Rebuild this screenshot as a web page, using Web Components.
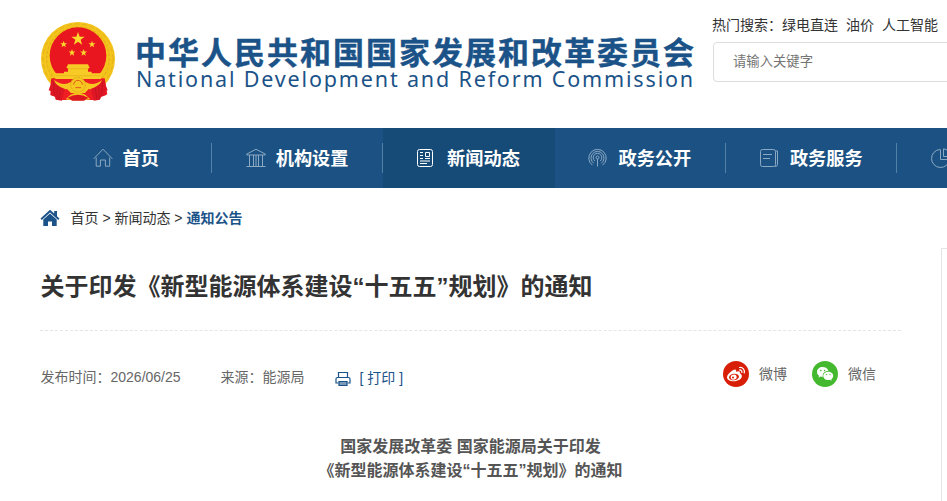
<!DOCTYPE html>
<html lang="zh-CN">
<head>
<meta charset="utf-8">
<title>关于印发《新型能源体系建设“十五五”规划》的通知</title>
<style>
  body {
    margin: 0;
    background: #fff;
    color: #333;
    font: 14px/20px "Liberation Sans", "Noto Sans CJK SC", sans-serif;
    overflow: hidden;
  }
</style>
</head>
<body>
<ndrc-page></ndrc-page>

<script>
const STAR = '0,-1 .235,-.324 .951,-.309 .38,.124 .588,.809 0,.4 -.588,.809 -.38,.124 -.951,-.309 -.235,-.324';

const ICONS = {
  home: '<path d="M.7 10.800 10 1.200l9.300 9.600M3.200 9.500v8.700h4.200v-6.200h5v6.200h4.300V9.500"/>',
  building: '<path d="M.8 6 10 1.300 19.200 6v1H.8zM3.500 7v11.200M7.500 7v11.200M10 7v11.200M12.500 7v11.200M16.500 7v11.200M.5 18.500h19"/>',
  news: '<rect x=".5" y="1.500" width="15" height="17" rx="2"/><path d="M3 4.500h3M3 7.500h3M3 10.500h3M3 13h10M3 15.500h7M8.500 4.500h4v4h-4zM8 10.500h5"/>',
  signal: '<circle cx="9.500" cy="9.500" r="1.500"/><path d="M9.500 11v7.500M6.800 13a4.300 4.300 0 1 1 5.400 0M5.700 15.200a6.500 6.500 0 1 1 7.600 0M4.500 17.200a8.700 8.700 0 1 1 10 0"/>',
  service: '<rect x=".5" y="1.500" width="15" height="17" rx="2"/><path d="M15.500 3h2v13.500q0 2-2.500 2M3 6.500h9M3 10.500h7"/>',
  chart: '<path d="M9 1.500a9 9 0 1 0 9.500 10H9.500V1.500M12.500.8a8 8 0 0 1 7 7.700h-7z"/>'
};

class NdrcEmblem extends HTMLElement {
  constructor() {
    super();
    this.attachShadow({ mode: 'open' });
  }

  connectedCallback() {
    const star = (x, y, r) => `<polygon points="${STAR}" transform="translate(${x} ${y}) scale(${r})" fill="#fcd92d"/>`;
    this.shadowRoot.innerHTML = `
      <style>
        :host { display: block; width: 77px; height: 83px; }
        svg { display: block; }
      </style>
      <svg width="77" height="83" viewBox="30 30 231 249">
        <circle cx="144" cy="147" r="111" fill="#f3c41c"/>
        <circle cx="144" cy="147" r="105" fill="none" stroke="#dfa819" stroke-width="2" stroke-dasharray="15 8"/>
        <circle cx="144" cy="145" r="94" fill="none" stroke="#e6b318" stroke-width="4" stroke-dasharray="9 5"/>
        <circle cx="144" cy="137" r="85" fill="#e9161f"/>
        <path d="M64 205h160l8 48-38 17H95l-34-16z" fill="#ef1d24"/>
        ${star(144, 87, 21)}
        ${star(101, 103, 11)}
        ${star(186, 103, 11)}
        ${star(126, 128, 11)}
        ${star(161, 128, 11)}
        <path d="M114 163h60l5 11h-5v11h11v5h28v17H76v-17h26v-5h12v-11h-5z" fill="#f7ca25"/>
        <path d="M112 176h65M78 197h134" stroke="#e5ad18" stroke-width="2"/>
        <path d="M72 210q28 20 50 6 22-17 45 0 22 14 50-6l-5 20q-18 12-36 7l-11 12h-42l-12-12q-22 4-35-7z" fill="#f6c621"/>
        <circle cx="144" cy="224" r="22" fill="#f6c621" stroke="#dba016" stroke-width="3" stroke-dasharray="5 3"/>
        <path d="M131 224a13 13 0 0 1 26 0M136 233h17" fill="none" stroke="#e05a19" stroke-width="3"/>
        <path d="M64 208q-1 17-8 33l8 3-2 12 12 2 3 11 19 3 8-36q-25-7-33-27M224 208q1 17 9 33l-8 3 2 12-13 2-4 11-19 3-8-36q25-7 34-27" fill="#df1724"/>
        <path d="M71 217l2 40M82 230l-1 37M91 235l-4 34M218 217l-3 40M206 230l2 37M196 235l5 34" stroke="#b8101e" stroke-width="2"/>
        <path d="M121 255q23-15 46 0l14 13q-37 7-74 0z" fill="#f3c01d"/>
        <path d="M113 263q30-18 62 0l-13 9h-35z" fill="#dc1620"/>
      </svg>
    `;
  }
}
customElements.define('ndrc-emblem', NdrcEmblem);

class NdrcHeader extends HTMLElement {
  constructor() {
    super();
    this.attachShadow({ mode: 'open' });
  }

  connectedCallback() {
    this.shadowRoot.innerHTML = `
      <style>
        :host {
          display: flex;
          box-sizing: border-box;
          width: 1200px;
          height: 128px;
          padding-left: 40px;
        }
        ndrc-emblem { margin-top: 20px; }
        .names {
          width: 577px;
          margin: 41px 0 0 18px;
          color: #1b5388;
          white-space: nowrap;
        }
        .cn {
          font: bold 31px/26px "Liberation Sans", "Noto Sans CJK SC", sans-serif;
          letter-spacing: 2px;
          -webkit-text-stroke: .4px #1b5388;
        }
        .en {
          margin-left: 1px;
          font: 21.500px/24px "Noto Sans", sans-serif;
          letter-spacing: 1.840px;
        }
        .search { margin: 15px 0 0 1px; width: 300px; }
        .hot { display: flex; gap: 8px; margin-left: -1px; white-space: nowrap; }
        .hot b { font-weight: normal; margin-right: -8px; }
        .box {
          box-sizing: border-box;
          height: 40px;
          margin-top: 7px;
          padding-left: 19px;
          border: 1px solid #ddd;
          border-radius: 4px;
          color: #757575;
          font-size: 13.330px;
          line-height: 38px;
        }
      </style>
      <ndrc-emblem></ndrc-emblem>
      <div class="names">
        <div class="cn">中华人民共和国国家发展和改革委员会</div>
        <div class="en">National Development and Reform Commission</div>
      </div>
      <div class="search">
        <div class="hot"><b>热门搜索：</b><span>绿电直连</span><span>油价</span><span>人工智能</span></div>
        <div class="box">请输入关键字</div>
      </div>
    `;
  }
}
customElements.define('ndrc-header', NdrcHeader);

class NdrcNavItem extends HTMLElement {
  constructor() {
    super();
    this.attachShadow({ mode: 'open' });
  }

  connectedCallback() {
    this.shadowRoot.innerHTML = `
      <style>
        :host {
          display: flex;
          flex: none;
          align-items: center;
          width: 171.400px;
          height: 60px;
          color: #fff;
          font-size: 18.200px;
          font-weight: bold;
        }
        :host([active]) { background: #164a77; }
        .inner {
          display: flex;
          flex: 1;
          align-items: center;
          justify-content: center;
          gap: 10px;
          height: 30px;
          border-right: 1px solid #5380a7;
        }
        :host([active]) .inner { border-color: transparent; }
        :host([edge]) .inner { justify-content: flex-start; padding-left: 34px; }
        span { padding-top: 1px; }
        svg { fill: none; stroke: #8ba9c3; stroke-width: 1; }
        :host([active]) svg { stroke: #fff; }
      </style>
      <div class="inner">
        <svg width="20" height="20" viewBox="0 0 20 20">${ICONS[this.getAttribute('icon')]}</svg>
        <span><slot></slot></span>
      </div>
    `;
  }
}
customElements.define('ndrc-nav-item', NdrcNavItem);

class NdrcNav extends HTMLElement {
  constructor() {
    super();
    this.attachShadow({ mode: 'open' });
  }

  connectedCallback() {
    this.shadowRoot.innerHTML = `
      <style>
        :host {
          display: flex;
          height: 60px;
          padding-left: 40.500px;
          background: #1c5283;
        }
      </style>
      <ndrc-nav-item icon="home">首页</ndrc-nav-item>
      <ndrc-nav-item icon="building">机构设置</ndrc-nav-item>
      <ndrc-nav-item icon="news" active>新闻动态</ndrc-nav-item>
      <ndrc-nav-item icon="signal">政务公开</ndrc-nav-item>
      <ndrc-nav-item icon="service">政务服务</ndrc-nav-item>
      <ndrc-nav-item icon="chart" edge></ndrc-nav-item>
    `;
  }
}
customElements.define('ndrc-nav', NdrcNav);

class NdrcCrumbs extends HTMLElement {
  constructor() {
    super();
    this.attachShadow({ mode: 'open' });
  }

  connectedCallback() {
    this.shadowRoot.innerHTML = `
      <style>
        :host { display: flex; align-items: center; height: 60px; padding-left: 40px; }
        svg { margin-right: 10.500px; }
        b { color: #1b5388; }
      </style>
      <svg width="20" height="18" viewBox="0 0 20 18" fill="#1b5388">
        <path d="M10 .8.5 9.500l1.300 1.400L10 3.600l8.200 7.300 1.300-1.400-2.500-2.300V2h-2.800v2.600z"/>
        <path d="M10 4.600 3.300 10.600V17H8v-4.500h4V17h4.700v-6.400z"/>
      </svg>
      <span>首页 &gt; 新闻动态 &gt; <b>通知公告</b></span>
    `;
  }
}
customElements.define('ndrc-crumbs', NdrcCrumbs);

class NdrcShare extends HTMLElement {
  constructor() {
    super();
    this.attachShadow({ mode: 'open' });
  }

  connectedCallback() {
    const glyph = this.getAttribute('type') === 'weibo'
      ? `<circle cx="13" cy="13" r="13" fill="#d81e06"/>
         <path d="M16.800 12.300c.8-2-1-2.800-3.800-1.600.8-2.400-.8-3-3.200-1.500C6.500 11.200 4 14 4 16.300c0 2.600 3.300 4 6.600 4 4.700 0 8.300-2.500 8.300-5 0-1.500-.9-2.400-2.100-3z" fill="#fff"/>
         <ellipse cx="11" cy="16" rx="5" ry="3.300" transform="rotate(-8 11 16)" fill="#d81e06"/>
         <ellipse cx="10.700" cy="16.200" rx="3" ry="2.500" transform="rotate(-20 10.700 16.200)" fill="#fff"/>
         <circle cx="10" cy="16.600" r="1" fill="#d81e06"/>
         <path d="M16.500 6.500c3.200-.5 5.600 2.200 4.700 5.500M16.500 9c1.600-.2 2.700.9 2.300 2.500" fill="none" stroke="#fff" stroke-width="1.200" stroke-linecap="round"/>`
      : `<circle cx="13" cy="13" r="13" fill="#44b92f"/>
         <path d="M10.700 6C7.500 6 5 8.100 5 10.900c0 1.600.8 2.900 2.100 3.800L6.500 16.500l2.200-1.100c.8.2 1.400.3 2.200.3-.8-3.200 1.900-5.900 5.500-5.700C15.800 7.600 13.500 6 10.700 6z" fill="#fff"/>
         <path d="M16.300 10.700c-2.800 0-5 1.900-5 4.200s2.200 4.200 5 4.200c.6 0 1.200-.1 1.700-.3l1.700.9-.5-1.500c1.200-.8 2-1.900 2-3.300 0-2.300-2.200-4.200-4.900-4.200z" fill="#fff"/>
         <g fill="#44b92f"><circle cx="8.800" cy="9.500" r=".8"/><circle cx="12.600" cy="9.500" r=".8"/><circle cx="14.600" cy="13.600" r=".7"/><circle cx="18" cy="13.600" r=".7"/></g>`;

    this.shadowRoot.innerHTML = `
      <style>
        :host { display: flex; align-items: center; gap: 10px; height: 26px; }
      </style>
      <svg width="26" height="26" viewBox="0 0 26 26">${glyph}</svg>
      <slot></slot>
    `;
  }
}
customElements.define('ndrc-share', NdrcShare);

class NdrcArticle extends HTMLElement {
  constructor() {
    super();
    this.attachShadow({ mode: 'open' });
  }

  connectedCallback() {
    this.shadowRoot.innerHTML = `
      <style>
        :host { display: block; width: 861px; margin-left: 40px; }
        h1 {
          margin: 0;
          padding: 21px 0 25px .5px;
          border-bottom: 1px dashed #e5e5e5;
          font-size: 24px;
          line-height: 36px;
        }
        .meta {
          display: flex;
          height: 26px;
          padding: 30px 0 0 .5px;
          color: #666;
        }
        .meta > span { margin: 6px 40px 0 0; }
        .meta .source { margin-right: 30px; }
        .print {
          display: flex;
          align-items: center;
          gap: 9px;
          height: 20px;
          margin-top: 8px;
          color: #1b5388;
        }
        .print span { margin-top: -2px; }
        .share { display: flex; gap: 25px; margin: 0 25px 0 auto; }
        .body {
          margin-top: 48px;
          color: #555;
          font-size: 16px;
          font-weight: bold;
          line-height: 24px;
          text-align: center;
        }
      </style>
      <h1>关于印发《新型能源体系建设“十五五”规划》的通知</h1>
      <div class="meta">
        <span>发布时间：2026/06/25</span>
        <span class="source">来源：能源局</span>
        <div class="print">
          <svg width="16" height="16" viewBox="0 0 16 16" fill="none" stroke="#1b5388" stroke-width="1.200">
            <path d="M3.500 6.500V1.500h9v5M3.500 12H1V8q0-1.500 1.500-1.500h11Q15 6.500 15 8v4h-2.500"/>
            <path d="M4 10.500h8v4H4z" fill="#7c9bb8"/>
          </svg>
          <span>[ 打印 ]</span>
        </div>
        <div class="share">
          <ndrc-share type="weibo">微博</ndrc-share>
          <ndrc-share type="wechat">微信</ndrc-share>
        </div>
      </div>
      <div class="body">国家发展改革委 国家能源局关于印发<br>《新型能源体系建设“十五五”规划》的通知</div>
    `;
  }
}
customElements.define('ndrc-article', NdrcArticle);

class NdrcPage extends HTMLElement {
  constructor() {
    super();
    this.attachShadow({ mode: 'open' });
  }

  connectedCallback() {
    this.shadowRoot.innerHTML = `
      <style>
        :host { display: block; height: 501px; overflow: hidden; }
        main { display: flex; gap: 40px; }
        ndrc-article { flex: none; }
        aside {
          flex: none;
          width: 298px;
          height: 400px;
          border: 1px solid #e5e5e5;
        }
      </style>
      <ndrc-header></ndrc-header>
      <ndrc-nav></ndrc-nav>
      <ndrc-crumbs></ndrc-crumbs>
      <main>
        <ndrc-article></ndrc-article>
        <aside></aside>
      </main>
    `;
  }
}
customElements.define('ndrc-page', NdrcPage);
</script>
</body>
</html>
